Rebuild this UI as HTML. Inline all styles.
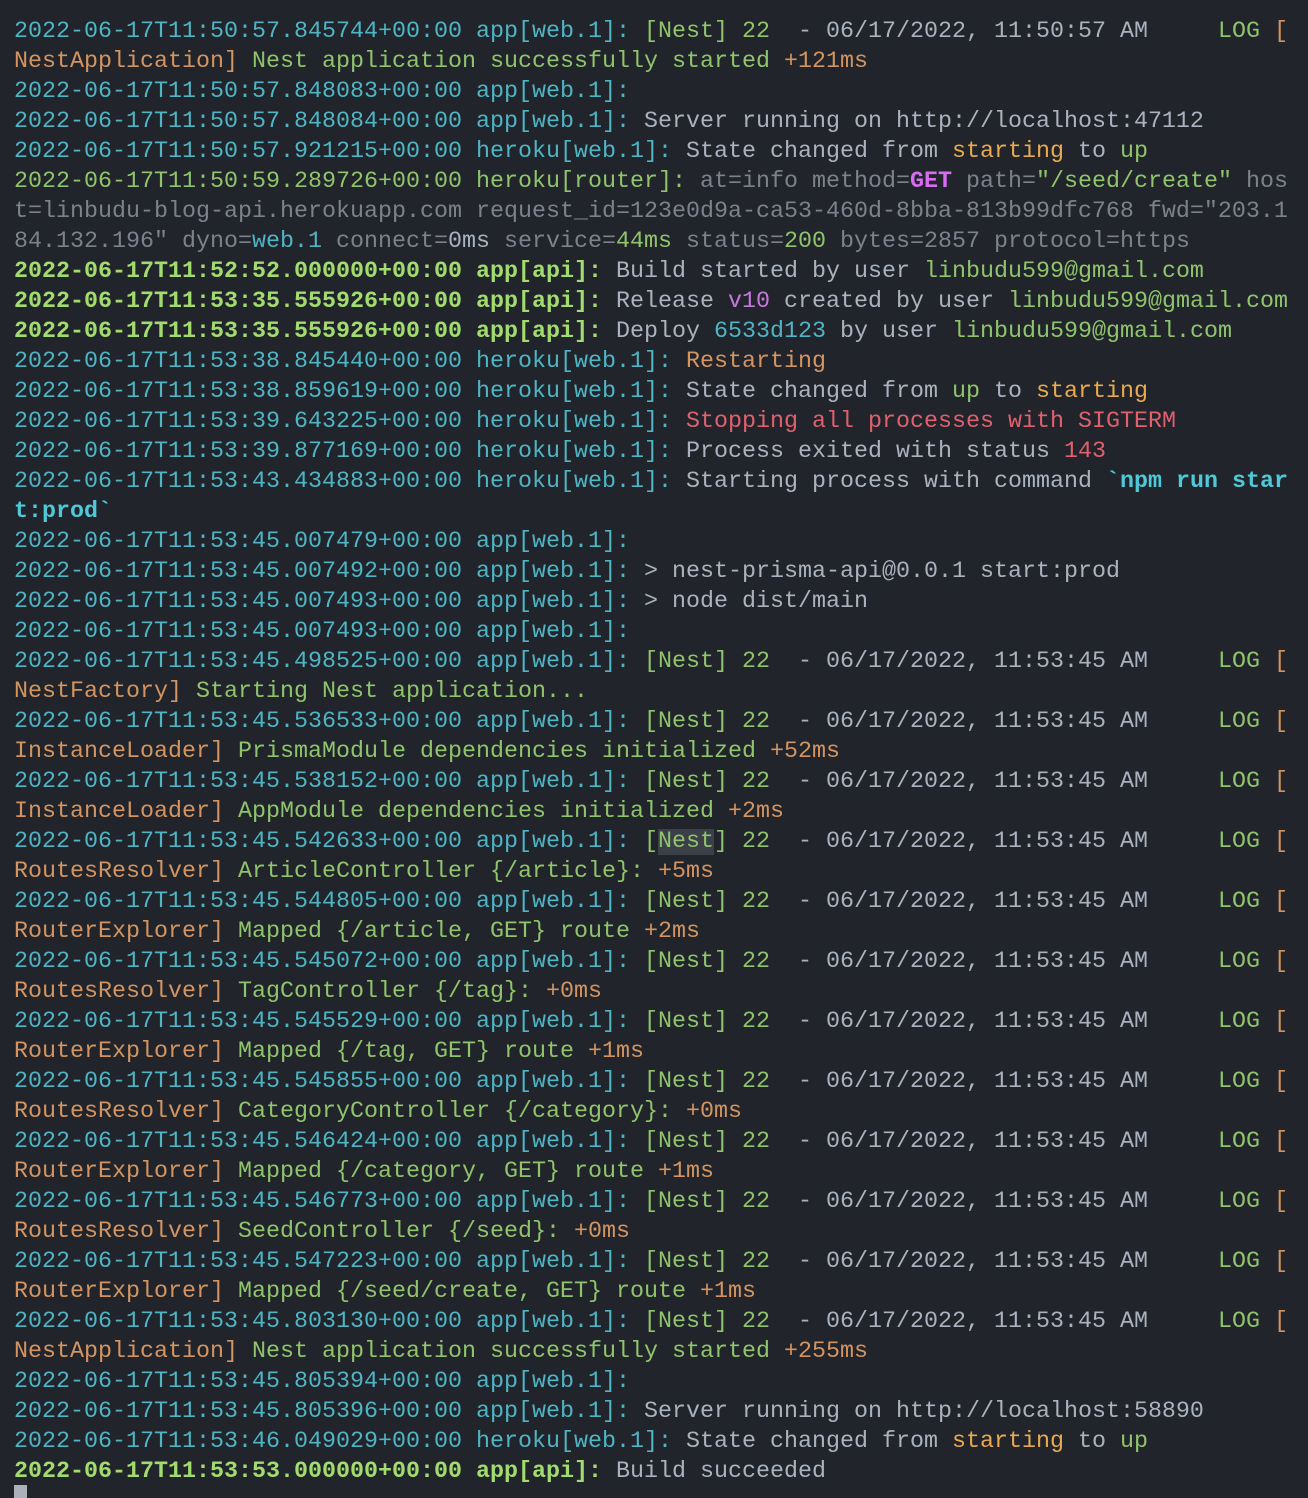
<!DOCTYPE html>
<html><head><meta charset="utf-8"><style>
html,body{margin:0;padding:0;background:#21252b;}
body{width:1308px;height:1498px;overflow:hidden;position:relative;}
#t{position:absolute;left:14px;top:17px;font-family:"Liberation Mono",monospace;font-size:23.33px;line-height:30px;color:#abb2bf;white-space:pre;}
.c{color:#4fb4c4}.g{color:#8fc46c}.o{color:#d39461}.y{color:#e9a94f}.w{color:#abb2bf}.d{color:#7c828d}.m{color:#d86cf0;font-weight:bold}.r{color:#e0606e}.b{font-weight:bold}.bg{color:#a3dc6e;font-weight:bold}.bc{color:#4fc8d8;font-weight:bold}.v{color:#c678dd}
.sel{background:#3a3f48}
#cur{position:absolute;left:14px;top:1485px;width:13px;height:13px;background:#abb0bb}
</style></head><body><div id="t"><div><span class="c">2022-06-17T11:50:57.845744+00:00 app[web.1]:</span> <span class="g">[Nest] 22</span>  <span class="w">- 06/17/2022, 11:50:57 AM</span>     <span class="g">LOG</span> <span class="o">[</span></div><div><span class="o">NestApplication]</span> <span class="g">Nest application successfully started</span> <span class="o">+121ms</span></div><div><span class="c">2022-06-17T11:50:57.848083+00:00 app[web.1]:</span></div><div><span class="c">2022-06-17T11:50:57.848084+00:00 app[web.1]:</span> Server running on http://localhost:47112</div><div><span class="c">2022-06-17T11:50:57.921215+00:00 heroku[web.1]:</span> State changed from <span class="y">starting</span> to <span class="g">up</span></div><div><span class="g">2022-06-17T11:50:59.289726+00:00 heroku[router]:</span> <span class="d">at=info method=</span><span class="m">GET</span> <span class="d">path=</span><span class="g">"/seed/create"</span> <span class="d">hos</span></div><div><span class="d">t=linbudu-blog-api.herokuapp.com request_id=123e0d9a-ca53-460d-8bba-813b99dfc768 fwd="203.1</span></div><div><span class="d">84.132.196" dyno=</span><span class="c">web.1</span> <span class="d">connect=</span>0ms <span class="d">service=</span><span class="g">44ms</span> <span class="d">status=</span><span class="g">200</span> <span class="d">bytes=2857 protocol=https</span></div><div><span class="bg">2022-06-17T11:52:52.000000+00:00 app[api]:</span> Build started by user <span class="g">linbudu599@gmail.com</span></div><div><span class="bg">2022-06-17T11:53:35.555926+00:00 app[api]:</span> Release <span class="v">v10</span> created by user <span class="g">linbudu599@gmail.com</span></div><div><span class="bg">2022-06-17T11:53:35.555926+00:00 app[api]:</span> Deploy <span class="c">6533d123</span> by user <span class="g">linbudu599@gmail.com</span></div><div><span class="c">2022-06-17T11:53:38.845440+00:00 heroku[web.1]:</span> <span class="o">Restarting</span></div><div><span class="c">2022-06-17T11:53:38.859619+00:00 heroku[web.1]:</span> State changed from <span class="g">up</span> to <span class="y">starting</span></div><div><span class="c">2022-06-17T11:53:39.643225+00:00 heroku[web.1]:</span> <span class="r">Stopping all processes with SIGTERM</span></div><div><span class="c">2022-06-17T11:53:39.877169+00:00 heroku[web.1]:</span> Process exited with status <span class="r">143</span></div><div><span class="c">2022-06-17T11:53:43.434883+00:00 heroku[web.1]:</span> Starting process with command <span class="bc">`npm run star</span></div><div><span class="bc">t:prod`</span></div><div><span class="c">2022-06-17T11:53:45.007479+00:00 app[web.1]:</span></div><div><span class="c">2022-06-17T11:53:45.007492+00:00 app[web.1]:</span> &gt; nest-prisma-api@0.0.1 start:prod</div><div><span class="c">2022-06-17T11:53:45.007493+00:00 app[web.1]:</span> &gt; node dist/main</div><div><span class="c">2022-06-17T11:53:45.007493+00:00 app[web.1]:</span></div><div><span class="c">2022-06-17T11:53:45.498525+00:00 app[web.1]:</span> <span class="g">[Nest] 22</span>  <span class="w">- 06/17/2022, 11:53:45 AM</span>     <span class="g">LOG</span> <span class="o">[</span></div><div><span class="o">NestFactory]</span> <span class="g">Starting Nest application...</span></div><div><span class="c">2022-06-17T11:53:45.536533+00:00 app[web.1]:</span> <span class="g">[Nest] 22</span>  <span class="w">- 06/17/2022, 11:53:45 AM</span>     <span class="g">LOG</span> <span class="o">[</span></div><div><span class="o">InstanceLoader]</span> <span class="g">PrismaModule dependencies initialized</span> <span class="o">+52ms</span></div><div><span class="c">2022-06-17T11:53:45.538152+00:00 app[web.1]:</span> <span class="g">[Nest] 22</span>  <span class="w">- 06/17/2022, 11:53:45 AM</span>     <span class="g">LOG</span> <span class="o">[</span></div><div><span class="o">InstanceLoader]</span> <span class="g">AppModule dependencies initialized</span> <span class="o">+2ms</span></div><div><span class="c">2022-06-17T11:53:45.542633+00:00 app[web.1]:</span> <span class="g">[<span class="sel">Nest</span>] 22</span>  <span class="w">- 06/17/2022, 11:53:45 AM</span>     <span class="g">LOG</span> <span class="o">[</span></div><div><span class="o">RoutesResolver]</span> <span class="g">ArticleController {/article}:</span> <span class="o">+5ms</span></div><div><span class="c">2022-06-17T11:53:45.544805+00:00 app[web.1]:</span> <span class="g">[Nest] 22</span>  <span class="w">- 06/17/2022, 11:53:45 AM</span>     <span class="g">LOG</span> <span class="o">[</span></div><div><span class="o">RouterExplorer]</span> <span class="g">Mapped {/article, GET} route</span> <span class="o">+2ms</span></div><div><span class="c">2022-06-17T11:53:45.545072+00:00 app[web.1]:</span> <span class="g">[Nest] 22</span>  <span class="w">- 06/17/2022, 11:53:45 AM</span>     <span class="g">LOG</span> <span class="o">[</span></div><div><span class="o">RoutesResolver]</span> <span class="g">TagController {/tag}:</span> <span class="o">+0ms</span></div><div><span class="c">2022-06-17T11:53:45.545529+00:00 app[web.1]:</span> <span class="g">[Nest] 22</span>  <span class="w">- 06/17/2022, 11:53:45 AM</span>     <span class="g">LOG</span> <span class="o">[</span></div><div><span class="o">RouterExplorer]</span> <span class="g">Mapped {/tag, GET} route</span> <span class="o">+1ms</span></div><div><span class="c">2022-06-17T11:53:45.545855+00:00 app[web.1]:</span> <span class="g">[Nest] 22</span>  <span class="w">- 06/17/2022, 11:53:45 AM</span>     <span class="g">LOG</span> <span class="o">[</span></div><div><span class="o">RoutesResolver]</span> <span class="g">CategoryController {/category}:</span> <span class="o">+0ms</span></div><div><span class="c">2022-06-17T11:53:45.546424+00:00 app[web.1]:</span> <span class="g">[Nest] 22</span>  <span class="w">- 06/17/2022, 11:53:45 AM</span>     <span class="g">LOG</span> <span class="o">[</span></div><div><span class="o">RouterExplorer]</span> <span class="g">Mapped {/category, GET} route</span> <span class="o">+1ms</span></div><div><span class="c">2022-06-17T11:53:45.546773+00:00 app[web.1]:</span> <span class="g">[Nest] 22</span>  <span class="w">- 06/17/2022, 11:53:45 AM</span>     <span class="g">LOG</span> <span class="o">[</span></div><div><span class="o">RoutesResolver]</span> <span class="g">SeedController {/seed}:</span> <span class="o">+0ms</span></div><div><span class="c">2022-06-17T11:53:45.547223+00:00 app[web.1]:</span> <span class="g">[Nest] 22</span>  <span class="w">- 06/17/2022, 11:53:45 AM</span>     <span class="g">LOG</span> <span class="o">[</span></div><div><span class="o">RouterExplorer]</span> <span class="g">Mapped {/seed/create, GET} route</span> <span class="o">+1ms</span></div><div><span class="c">2022-06-17T11:53:45.803130+00:00 app[web.1]:</span> <span class="g">[Nest] 22</span>  <span class="w">- 06/17/2022, 11:53:45 AM</span>     <span class="g">LOG</span> <span class="o">[</span></div><div><span class="o">NestApplication]</span> <span class="g">Nest application successfully started</span> <span class="o">+255ms</span></div><div><span class="c">2022-06-17T11:53:45.805394+00:00 app[web.1]:</span></div><div><span class="c">2022-06-17T11:53:45.805396+00:00 app[web.1]:</span> Server running on http://localhost:58890</div><div><span class="c">2022-06-17T11:53:46.049029+00:00 heroku[web.1]:</span> State changed from <span class="y">starting</span> to <span class="g">up</span></div><div><span class="bg">2022-06-17T11:53:53.000000+00:00 app[api]:</span> Build succeeded</div></div><div id="cur"></div></body></html>
